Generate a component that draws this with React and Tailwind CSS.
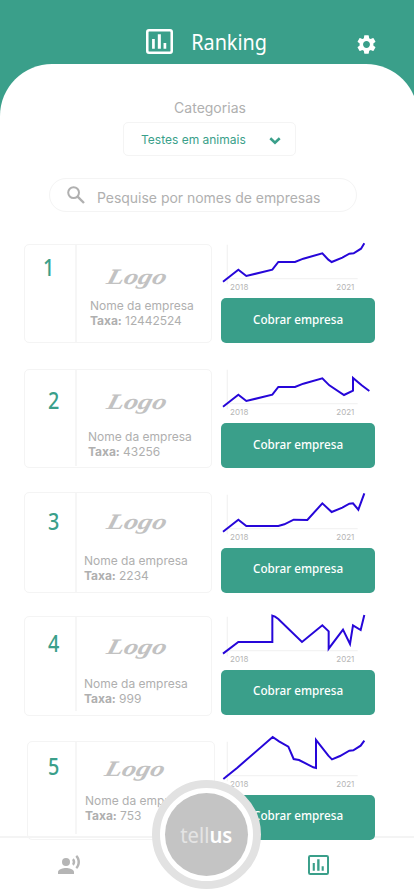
import React from "react";
import { MdSettings } from "react-icons/md";

const companies = [
  {
    rank: 1,
    rate: "12442524",
    row: "h-[125px]",
    card: "h-[99px]",
    rankPos: "pr-[2px] pt-[6px]",
    divider: "h-[97px]",
    logo: "pt-[18px]",
    info: "pl-[13px] top-[53px]",
    chart: "",
    label: "pb-[3px]",
    points: "24,140 70,104 94,123 172,104 190,81 240,81 265,71 322,55 340,74 350,81 382,68 403,56 416,55 438,41 448,25",
  },
  {
    rank: 2,
    rate: "43256",
    row: "h-[123px]",
    card: "h-[99px]",
    rankPos: "pl-[8px] pt-[14px]",
    divider: "h-[96px]",
    logo: "pt-[18px]",
    info: "pl-[11px] top-[59px]",
    chart: "",
    label: "pb-[3px]",
    points: "24,140 70,104 94,123 172,104 190,81 240,81 265,71 322,55 343,76 387,105 414,92 414,54 440,76 463,93",
  },
  {
    rank: 3,
    rate: "2234",
    row: "h-[124px]",
    card: "h-[101px]",
    rankPos: "pl-[8px] pt-[12px]",
    divider: "h-[99px]",
    logo: "pt-[15px]",
    info: "pl-[7px] top-[60px]",
    chart: "mt-[2px]",
    label: "pb-[5px]",
    points: "24,140 70,104 94,123 190,123 208,118 236,104 277,105 322,55 350,81 382,68 403,56 414,55 430,74 448,25",
  },
  {
    rank: 4,
    rate: "999",
    row: "h-[125px]",
    card: "h-[100px]",
    rankPos: "pl-[8px] pt-[10px]",
    divider: "h-[94px]",
    logo: "pt-[16px]",
    info: "pl-[7px] top-[59px]",
    chart: "",
    label: "pb-[5px]",
    points: "24,140 70,105 172,105 172,26 180,29 190,36 261,105 322,55 341,73 341,125 384,68 405,111 414,55 437,69 448,24",
  },
  {
    rank: 5,
    rate: "753",
    row: "h-[99px] pl-[3px]",
    card: "h-[99px]",
    rankPos: "pl-[5px] pt-[8px]",
    divider: "h-[92px]",
    logo: "pt-[13px] pr-[6px]",
    info: "pl-[8px] top-[51px]",
    chart: "",
    label: "pb-[5px]",
    points: "25,141 67,107 173,15 192,28 220,44 236,81 252,84 295,106 303,108 303,24 340,71 351,82 375,72 403,56 415,55 437,41 448,26",
  },
];

function RankingIcon({ className }) {
  return (
    <svg viewBox="0 0 80 75" preserveAspectRatio="none" className={className}>
      <rect x="3.75" y="3.75" width="72.5" height="67.5" rx="5" fill="none" stroke="currentColor" strokeWidth="7.5" />
      <path d="M18 30h8v29h-8zM35 16h9v43h-9zM52 42h8v17h-8z" fill="currentColor" />
    </svg>
  );
}

function SearchIcon({ className }) {
  return (
    <svg viewBox="0 0 18 18" fill="none" stroke="currentColor" strokeWidth="2" className={className}>
      <circle cx="6.6" cy="6.6" r="5.4" />
      <path d="M10.6 10.6L17 17" strokeWidth="2.4" />
    </svg>
  );
}

function SpeakerIcon({ className }) {
  return (
    <svg viewBox="0 0 24 24" fill="currentColor" className={className}>
      <circle cx="9" cy="9" r="4" />
      <path d="M9 15c-2.67 0-8 1.34-8 4v2h16v-2c0-2.66-5.33-4-8-4z" />
      <path d="M16.76 5.36l-1.68 1.69c.84 1.18.84 2.71 0 3.89l1.68 1.69c2.02-2.02 2.02-5.07 0-7.27zM20.07 2l-1.63 1.63c2.77 3.02 2.77 7.56 0 10.74L20.07 16c3.9-3.89 3.91-9.95 0-14z" />
    </svg>
  );
}

function TrendChart({ points, className }) {
  return (
    <svg viewBox="18 27 462 162" className={"block h-[54px] w-[154px] shrink-0 overflow-visible " + className}>
      <path d="M37 29V148M30 131H428" fill="none" stroke="#f3f3f3" strokeWidth="4" />
      <polyline points={points} fill="none" stroke="#2606d9" strokeWidth="6" />
      <g fill="#b5b5b5" fontFamily="Inter, sans-serif" fontSize="24">
        <text x="45" y="165" textLength="55">2018</text>
        <text x="364" y="165" textLength="54">2021</text>
      </g>
    </svg>
  );
}

function CompanyRow({ company }) {
  return (
    <li className={"flex justify-between " + company.row}>
      <div className={"flex w-[188px] shrink-0 rounded-[5px] border border-[#f4f4f4] " + company.card}>
        <div className={"flex shrink-0 justify-center " + (company.rank === 5 ? "w-[47px] " : "w-[50px] ") + company.rankPos}>
          <span className="inline-block h-8 scale-x-[.86] font-['Noto_Sans'] text-[23px] leading-8 font-medium text-[#3a9f8a]">{company.rank}</span>
        </div>
        <div className={"w-[2px] shrink-0 bg-[#f6f6f6] " + company.divider} />
        <div className="relative min-w-0 flex-1">
          <div className={"flex justify-center " + company.logo}>
            <span className="mr-[14px] inline-block h-7 scale-x-[1.28] -skew-x-12 font-['Liberation_Serif'] text-[22px] leading-7 font-bold text-[#c2c2c2] italic">Logo</span>
          </div>
          <div className={"absolute left-0 font-['Inter'] text-[12px] leading-[15px] whitespace-nowrap text-[#afafaf] " + company.info}>
            <p>Nome da empresa</p>
            <p className="tracking-[-.05px]"><b>Taxa:</b> {company.rate}</p>
          </div>
        </div>
      </div>
      <div className="w-[154px]">
        <TrendChart points={company.points} className={company.chart} />
        <button className={"flex h-[45px] w-full items-center justify-center rounded-[5px] bg-[#3a9f8a] " + company.label}>
          <span className="inline-block scale-x-[.9] font-['Noto_Sans'] text-[13px] leading-5 font-medium whitespace-nowrap text-white">Cobrar empresa</span>
        </button>
      </div>
    </li>
  );
}

export default function App() {
  return (
    <div className="relative flex h-[896px] w-[414px] flex-col overflow-hidden bg-[#3a9f8a]">
      <header className="flex h-16 shrink-0 pl-[146px] text-white">
        <RankingIcon className="mt-[29px] h-[25px] w-[27px]" />
        <h1 className="mt-[25px] ml-[7px] w-[98px] text-center font-['Noto_Sans'] text-[22px] leading-8">
          <span className="inline-block scale-x-[.9]">Ranking</span>
        </h1>
        <MdSettings className="mt-[33px] ml-[77px] size-[23px]" />
      </header>

      <main className="flex w-[418px] flex-1 flex-col rounded-t-[52px] bg-white font-['Inter']">
        <div className="flex w-[414px] flex-col">
          <p className="mt-[34px] w-[420px] text-center text-[14px] leading-5 text-[#b0b0b0]">Categorias</p>
          <button className="mt-1 ml-[123px] flex h-[34px] w-[173px] items-center rounded-[5px] border border-[#f4f4f4] pl-[17px] text-[12px] text-[#3a9f8a]">
            <span className="w-[128px] pt-0.5 text-left">Testes em animais</span>
            <svg viewBox="0 0 12 8" className="mt-1 h-2 w-3">
              <path d="M1.3 1.3L6 5.7L10.7 1.3" fill="none" stroke="currentColor" strokeWidth="2.6" />
            </svg>
          </button>
          <div className="mt-[22px] ml-[49px] flex h-[34px] w-[308px] rounded-full border border-[#f4f4f4] text-[#b0b0b0]">
            <SearchIcon className="mt-[7px] ml-[17px] size-[18px]" />
            <span className="mt-[9px] ml-[12px] text-[14px] leading-5 tracking-[-.03px] whitespace-nowrap">Pesquise por nomes de empresas</span>
          </div>

          <ul className="relative z-10 mt-[32px] mr-[39px] ml-6">
            {companies.map((company) => (
              <CompanyRow key={company.rank} company={company} />
            ))}
          </ul>
        </div>
        <nav className="-mt-1 flex h-[60px] w-[414px] justify-between border-t-2 border-[#f4f4f4] pt-[15px] pr-[85px] pl-[57px]">
          <SpeakerIcon className="size-6 text-[#b5b5b5]" />
          <RankingIcon className="mt-[2px] h-5 w-[21px] text-[#3a9f8a]" />
        </nav>
      </main>

      <button className="absolute top-[780px] left-[152px] z-20 flex size-[109px] items-center justify-center rounded-full border-8 border-[#e2e2e2] bg-white">
        <span className="flex size-[83px] items-center justify-center rounded-full bg-[#c4c4c4] font-['Noto_Sans'] text-[22px] text-[#e4e4e4]">
          <span className="inline-block scale-x-[.92]">tell<span className="font-semibold text-white">us</span></span>
        </span>
      </button>
    </div>
  );
}
